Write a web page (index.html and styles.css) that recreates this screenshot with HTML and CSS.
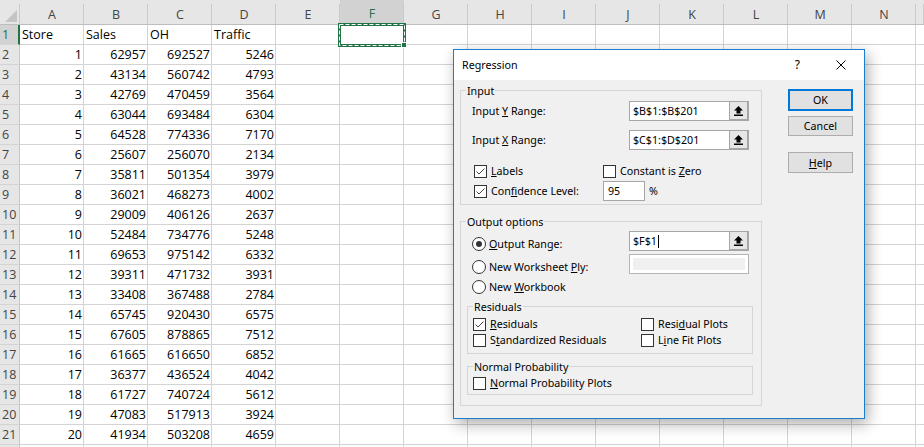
FILE: index.html
```html
<!DOCTYPE html>
<html>
<head>
<meta charset="utf-8">
<title>Regression</title>
<link rel="stylesheet" href="styles.css">
</head>
<body>
<div class="sheet">
  <span class="corner"><svg width="20" height="24" viewBox="0 0 20 24"><polygon points="17,10 17,22 5,22" fill="#c4c4c4"/></svg></span>
  <span class="ch">A</span><span class="ch">B</span><span class="ch">C</span><span class="ch">D</span><span class="ch">E</span><span class="ch sel">F</span><span class="ch">G</span><span class="ch">H</span><span class="ch">I</span><span class="ch">J</span><span class="ch">K</span><span class="ch">L</span><span class="ch">M</span><span class="ch">N</span><span class="ch"></span>

  <span class="rh sel">1</span><span>Store</span><span>Sales</span><span>OH</span><span>Traffic</span><span></span><span class="active"><svg class="ants" width="72" height="28" viewBox="0 0 72 28"><rect x="1.5" y="1.5" width="65" height="21" fill="none" stroke="#217346" stroke-width="3"/><rect x="1.5" y="1.5" width="65" height="21" fill="none" stroke="#fff" stroke-width="1" stroke-dasharray="4 2"/><rect x="63.5" y="19.5" width="5" height="5" fill="#217346" stroke="#fff" stroke-width="1"/></svg></span><span class="blank b9"></span>
  <span class="rh">2</span><span class="n">1</span><span class="n">62957</span><span class="n">692527</span><span class="n">5246</span><span class="blank"></span>
  <span class="rh">3</span><span class="n">2</span><span class="n">43134</span><span class="n">560742</span><span class="n">4793</span><span class="blank"></span>
  <span class="rh">4</span><span class="n">3</span><span class="n">42769</span><span class="n">470459</span><span class="n">3564</span><span class="blank"></span>
  <span class="rh">5</span><span class="n">4</span><span class="n">63044</span><span class="n">693484</span><span class="n">6304</span><span class="blank"></span>
  <span class="rh">6</span><span class="n">5</span><span class="n">64528</span><span class="n">774336</span><span class="n">7170</span><span class="blank"></span>
  <span class="rh">7</span><span class="n">6</span><span class="n">25607</span><span class="n">256070</span><span class="n">2134</span><span class="blank"></span>
  <span class="rh">8</span><span class="n">7</span><span class="n">35811</span><span class="n">501354</span><span class="n">3979</span><span class="blank"></span>
  <span class="rh">9</span><span class="n">8</span><span class="n">36021</span><span class="n">468273</span><span class="n">4002</span><span class="blank"></span>
  <span class="rh">10</span><span class="n">9</span><span class="n">29009</span><span class="n">406126</span><span class="n">2637</span><span class="blank"></span>
  <span class="rh">11</span><span class="n">10</span><span class="n">52484</span><span class="n">734776</span><span class="n">5248</span><span class="blank"></span>
  <span class="rh">12</span><span class="n">11</span><span class="n">69653</span><span class="n">975142</span><span class="n">6332</span><span class="blank"></span>
  <span class="rh">13</span><span class="n">12</span><span class="n">39311</span><span class="n">471732</span><span class="n">3931</span><span class="blank"></span>
  <span class="rh">14</span><span class="n">13</span><span class="n">33408</span><span class="n">367488</span><span class="n">2784</span><span class="blank"></span>
  <span class="rh">15</span><span class="n">14</span><span class="n">65745</span><span class="n">920430</span><span class="n">6575</span><span class="blank"></span>
  <span class="rh">16</span><span class="n">15</span><span class="n">67605</span><span class="n">878865</span><span class="n">7512</span><span class="blank"></span>
  <span class="rh">17</span><span class="n">16</span><span class="n">61665</span><span class="n">616650</span><span class="n">6852</span><span class="blank"></span>
  <span class="rh">18</span><span class="n">17</span><span class="n">36377</span><span class="n">436524</span><span class="n">4042</span><span class="blank"></span>
  <span class="rh">19</span><span class="n">18</span><span class="n">61727</span><span class="n">740724</span><span class="n">5612</span><span class="blank"></span>
  <span class="rh">20</span><span class="n">19</span><span class="n">47083</span><span class="n">517913</span><span class="n">3924</span><span class="blank"></span>
  <span class="rh">21</span><span class="n">20</span><span class="n">41934</span><span class="n">503208</span><span class="n">4659</span><span class="blank"></span>
  <span class="rh"></span><span></span><span></span><span></span><span></span><span class="blank"></span>
</div>

<div class="dialog">
  <div class="titlebar">
    <span class="title">Regression</span>
    <span class="qmark">?</span>
    <svg class="close" width="10" height="10" viewBox="0 0 10 10"><path d="M0.5 0.5L9.5 9.5M9.5 0.5L0.5 9.5" stroke="#000" stroke-width="1"/></svg>
  </div>
  <div class="dbody">
    <div class="groups">
      <div class="group g-input">
        <span class="legend">Input</span>
        <div class="range-row r-y">
          <span>Input <u>Y</u> Range:</span>
          <div class="range"><span class="val">$B$1:$B$201</span><span class="pick"><svg width="9" height="10" viewBox="0 0 9 10"><path d="M4.5 0L9 4.5H6.5V7.5H2.5V4.5H0Z" fill="#000"/><rect x="0" y="8.5" width="9" height="1.5" fill="#000"/></svg></span></div>
        </div>
        <div class="range-row r-x">
          <span>Input <u>X</u> Range:</span>
          <div class="range"><span class="val">$C$1:$D$201</span><span class="pick"><svg width="9" height="10" viewBox="0 0 9 10"><path d="M4.5 0L9 4.5H6.5V7.5H2.5V4.5H0Z" fill="#000"/><rect x="0" y="8.5" width="9" height="1.5" fill="#000"/></svg></span></div>
        </div>
        <div class="checks c-1">
          <span class="cb"><span class="box"><svg width="11" height="11" viewBox="0 0 11 11"><path d="M1.5 5.5L4 8L9.5 2.5" fill="none" stroke="#444" stroke-width="1"/></svg></span><span><u>L</u>abels</span></span>
          <span class="cb"><span class="box"></span><span>Constant is <u>Z</u>ero</span></span>
        </div>
        <div class="checks c-2">
          <span class="cb"><span class="box"><svg width="11" height="11" viewBox="0 0 11 11"><path d="M1.5 5.5L4 8L9.5 2.5" fill="none" stroke="#444" stroke-width="1"/></svg></span><span>Con<u>f</u>idence Level:</span></span>
          <span class="conf"><span class="small-input">95</span><span>%</span></span>
        </div>
      </div>

      <div class="group g-output">
        <span class="legend">Output options</span>
        <div class="o-row o-row1">
          <span class="rb"><span class="radio on"></span><span><u>O</u>utput Range:</span></span>
          <div class="range"><span class="val">$F$1<span class="caret"></span></span><span class="pick"><svg width="9" height="10" viewBox="0 0 9 10"><path d="M4.5 0L9 4.5H6.5V7.5H2.5V4.5H0Z" fill="#000"/><rect x="0" y="8.5" width="9" height="1.5" fill="#000"/></svg></span></div>
        </div>
        <div class="o-row o-row2">
          <span class="rb"><span class="radio"></span><span>New Worksheet <u>P</u>ly:</span></span>
          <div class="disabled-input"></div>
        </div>
        <div class="o-row o-row3">
          <span class="rb"><span class="radio"></span><span>New <u>W</u>orkbook</span></span>
        </div>

        <div class="group g-res">
          <span class="legend">Residuals</span>
          <div class="res-grid res-1">
            <span class="cb"><span class="box"><svg width="11" height="11" viewBox="0 0 11 11"><path d="M1.5 5.5L4 8L9.5 2.5" fill="none" stroke="#444" stroke-width="1"/></svg></span><span><u>R</u>esiduals</span></span>
            <span class="cb"><span class="box"></span><span>Resi<u>d</u>ual Plots</span></span>
          </div>
          <div class="res-grid res-2">
            <span class="cb"><span class="box"></span><span>S<u>t</u>andardized Residuals</span></span>
            <span class="cb"><span class="box"></span><span>L<u>i</u>ne Fit Plots</span></span>
          </div>
        </div>

        <div class="group g-norm">
          <span class="legend">Normal Probability</span>
          <div class="res-grid norm-1">
            <span class="cb"><span class="box"></span><span><u>N</u>ormal Probability Plots</span></span>
          </div>
        </div>
      </div>
    </div>

    <div class="buttons">
      <span class="btn btn-ok">OK</span>
      <span class="btn btn-cancel">Cancel</span>
      <span class="btn btn-help"><u>H</u>elp</span>
    </div>
  </div>
</div>
</body>
</html>
```

FILE: styles.css
```css
* { box-sizing: border-box; }

body {
  margin: 0;
  width: 924px;
  height: 447px;
  overflow: hidden;
  background: #fff;
  position: relative;
  font-family: "Open Sans", "Liberation Sans", sans-serif;
}

/* ---------- spreadsheet ---------- */
.sheet {
  display: grid;
  grid-template-columns: 20px repeat(14, 64px) 1fr;
  grid-template-rows: 25px;
  grid-auto-rows: 20px;
  height: 447px;
  overflow: hidden;
  font-size: 12.5px;
  line-height: 19px;
  color: #000;
}

.sheet > span {
  border-right: 1px solid #d4d4d4;
  border-bottom: 1px solid #d4d4d4;
  padding: 0 1px 0 2px;
  white-space: nowrap;
  overflow: hidden;
}

.sheet > .n { text-align: right; }

.sheet > .corner,
.sheet > .ch {
  background: #e6e6e6 linear-gradient(#cacaca, #cacaca) no-repeat right bottom / 1px 20px;
  border-right: 0;
  border-bottom: 1px solid #bdbdbd;
  padding: 5px 0 0;
  text-align: center;
  color: #444;
  line-height: 19px;
}

.sheet > .corner { padding: 0; }
.corner svg { display: block; }

.sheet > .ch.sel {
  background-color: #d2d2d2;
  color: #217346;
  border-bottom: 2px solid #217346;
  line-height: 18px;
}

.sheet > .rh {
  background: #e6e6e6;
  color: #444;
  border-right: 1px solid #c6c6c6;
  border-bottom: 1px solid #d4d4d4;
  padding-left: 2px;
}

.sheet > .rh.sel {
  background: #d2d2d2;
  color: #217346;
  border-right: 2px solid #217346;
}

.sheet > .blank {
  grid-column: span 11;
  border-right: 0;
  background: repeating-linear-gradient(to right, transparent 0 63px, #d4d4d4 63px 64px);
}

.sheet > .blank.b9 { grid-column: span 9; }

.sheet > .active {
  position: relative;
  overflow: visible;
}

.ants {
  position: absolute;
  left: -2px;
  top: -2px;
  display: block;
  z-index: 2;
}

/* ---------- dialog ---------- */
.dialog {
  position: absolute;
  left: 453px;
  top: 49px;
  width: 412px;
  height: 370px;
  border: 1px solid #1a7dd0;
  background: #f0f0f0;
  box-shadow: 3px 5px 14px rgba(0, 0, 0, 0.32);
  font-family: "Noto Sans", "Liberation Sans", sans-serif;
  font-size: 10.7px;
  line-height: 14px;
  color: #000;
  display: flex;
  flex-direction: column;
  z-index: 10;
}

.dialog u { text-underline-offset: 1px; }

.titlebar {
  height: 30px;
  background: #fff;
  display: flex;
  align-items: center;
  padding-left: 8px;
}

.title {
  flex: 1;
  line-height: 30px;
}

.qmark {
  font-size: 12px;
  margin-right: 36px;
  line-height: 30px;
}

.close {
  display: block;
  margin-right: 18px;
}

.dbody {
  flex: 1;
  display: flex;
  padding-left: 6px;
}

.groups { width: 302px; }

.group {
  position: relative;
  border: 1px solid #d5d5d5;
}

.legend {
  position: absolute;
  top: -7px;
  left: 5px;
  padding: 0 1px;
  background: #f0f0f0;
  line-height: 14px;
  white-space: nowrap;
}

.g-input {
  margin-top: 10px;
  padding: 0 12px 3px 11px;
}

.range-row {
  display: flex;
  align-items: center;
  justify-content: space-between;
  height: 20px;
}

.r-y { margin-top: 10px; }
.r-x { margin-top: 9px; }

.range {
  width: 120px;
  height: 20px;
  display: flex;
  border: 1px solid #a6a6a6;
  background: #fff;
}

.val {
  flex: 1;
  padding-left: 3px;
  line-height: 18px;
  white-space: nowrap;
  display: flex;
  align-items: center;
}

.caret {
  width: 1px;
  height: 13px;
  background: #000;
  margin-left: 1px;
}

.pick {
  width: 20px;
  display: flex;
  align-items: center;
  justify-content: center;
  background: #e6e6e6;
  border: 1px solid #a6a6a6;
  margin: -1px -1px -1px 0;
  border-width: 1px 2px 2px 1px;
}

.checks {
  display: grid;
  grid-template-columns: 129px 1fr;
  align-items: center;
  margin-left: 2px;
}

.c-1 { margin-top: 13px; height: 16px; }
.c-2 { margin-top: 2px; height: 20px; }

.cb {
  display: flex;
  align-items: center;
  gap: 4px;
  white-space: nowrap;
}

.box {
  width: 13px;
  height: 13px;
  flex: none;
  border: 1px solid #333;
  background: #fff;
  display: flex;
}

.box svg { display: block; }

.conf {
  display: flex;
  align-items: center;
  gap: 4px;
}

.small-input {
  width: 42px;
  height: 20px;
  border: 1px solid #a6a6a6;
  background: #fff;
  padding-left: 4px;
  line-height: 18px;
}

.g-output {
  margin-top: 16px;
  padding: 0 8px 10px 6px;
}

.o-row {
  display: flex;
  justify-content: space-between;
  align-items: center;
  margin: 0 4px 0 5px;
}

.o-row1 { margin-top: 9px; height: 20px; }
.o-row2 { margin-top: 3px; height: 20px; }
.o-row3 { margin-top: 5px; height: 16px; }

.o-row1 .rb,
.o-row2 .rb { align-self: flex-end; }

.rb {
  display: flex;
  align-items: center;
  gap: 3px;
  white-space: nowrap;
  height: 14px;
}

.radio {
  width: 14px;
  height: 14px;
  flex: none;
  border-radius: 50%;
  border: 1px solid #333;
  background: #fff;
  display: flex;
  align-items: center;
  justify-content: center;
}

.radio.on::after {
  content: "";
  width: 6px;
  height: 6px;
  border-radius: 50%;
  background: #333;
}

.disabled-input {
  width: 120px;
  height: 20px;
  border: 1px solid #b4b4b4;
  background: #f0f0f0;
  box-shadow: inset 0 0 0 3px #fff;
}

.g-res {
  margin-top: 11px;
  padding: 0 0 6px 5px;
}

.res-grid {
  display: grid;
  grid-template-columns: 168px 1fr;
  align-items: center;
  height: 14px;
}

.res-1 { margin-top: 10px; }
.res-2 { margin-top: 2px; }

.g-norm {
  margin-top: 12px;
  padding: 0 0 4px 5px;
}

.norm-1 { margin-top: 9px; }

.buttons {
  margin-left: 26px;
  padding-top: 9px;
  width: 65px;
  display: flex;
  flex-direction: column;
}

.btn {
  display: flex;
  align-items: center;
  justify-content: center;
  background: #e1e1e1;
  border: 1px solid #adadad;
}

.btn-ok {
  height: 22px;
  border: 2px solid #0078d7;
}

.btn-cancel {
  margin-top: 5px;
  height: 20px;
}

.btn-help {
  margin-top: 16px;
  height: 21px;
}
```
